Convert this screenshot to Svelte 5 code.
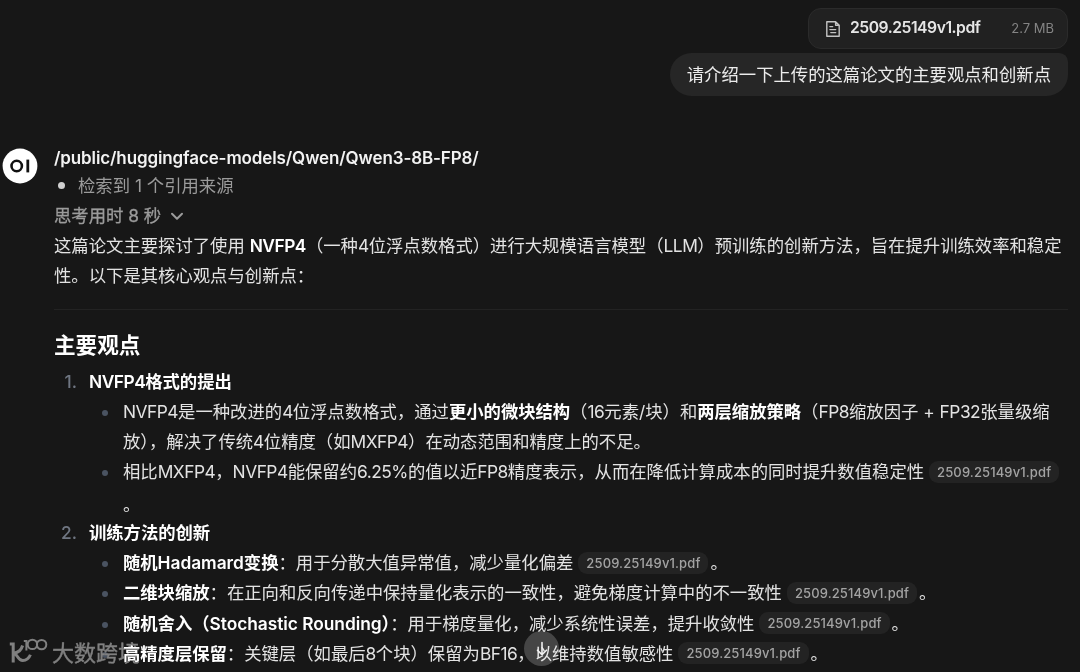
<script lang="ts">
  type Item = { lines: string[]; cite?: boolean; wrapEnd?: boolean };
  type Section = { title: string; items: Item[] };

  const file = { name: "2509.25149v1.pdf", size: "2.7 MB" };

  const intro = [
    "这篇论文主要探讨了使用 **NVFP4**（一种4位浮点数格式）进行大规模语言模型（LLM）预训练的创新方法，旨在提升训练效率和稳定",
    "性。以下是其核心观点与创新点：",
  ];

  const sections: Section[] = [
    {
      title: "NVFP4格式的提出",
      items: [
        {
          lines: [
            "NVFP4是一种改进的4位浮点数格式，通过**更小的微块结构**（16元素/块）和**两层缩放策略**（FP8缩放因子 + FP32张量级缩",
            "放），解决了传统4位精度（如MXFP4）在动态范围和精度上的不足。",
          ],
        },
        {
          lines: ["相比MXFP4，NVFP4能保留约6.25%的值以近FP8精度表示，从而在降低计算成本的同时提升数值稳定性"],
          cite: true,
          wrapEnd: true,
        },
      ],
    },
    {
      title: "训练方法的创新",
      items: [
        { lines: ["**随机Hadamard变换**：用于分散大值异常值，减少量化偏差"], cite: true },
        { lines: ["**二维块缩放**：在正向和反向传递中保持量化表示的一致性，避免梯度计算中的不一致性"], cite: true },
        { lines: ["**随机舍入（Stochastic Rounding）**：用于梯度量化，减少系统性误差，提升收敛性"], cite: true },
        { lines: ["**高精度层保留**：关键层（如最后8个块）保留为BF16，以维持数值敏感性"], cite: true },
      ],
    },
  ];

  // Odd parts of a split on ** are the bold ones.
  const parts = (s: string) => s.split("**");
  // Odd parts here are runs of capitals and digits, which are set tighter.
  const runs = (s: string) => s.split(/([A-Z0-9.%+]{2,}|\d)/);
</script>

{#snippet tight(text: string)}
  {#each runs(text) as r, i (i)}{#if i % 2}<span class="caps">{r}</span>{:else}{r}{/if}{/each}
{/snippet}

{#snippet rich(text: string)}
  {#each parts(text) as p, i (i)}{#if i % 2}<strong>{@render tight(p)}</strong>{:else}{@render tight(p)}{/if}{/each}
{/snippet}

<main class="chat">
  <section class="user">
    <div class="file">
      <svg viewBox="0 0 16 18" width="16" height="18" fill="none" stroke="currentColor" stroke-width="1.4" stroke-linejoin="round" stroke-linecap="round">
        <path d="M10.6 1.7H1.8v14.6h12.4V5.2zM10.6 1.7v3.5h3.6M4.9 6.6h2.8M4.9 9.6h5.8M5.8 12.6h4.9" />
      </svg>
      <span class="name">{file.name}</span>
      <span class="size">{file.size}</span>
    </div>
    <div class="bubble">请介绍一下上传的这篇论文的主要观点和创新点</div>
  </section>

  <section class="reply">
    <div class="avatar">
      <svg viewBox="0 0 36 36" width="36" height="36">
        <circle cx="18" cy="18" r="17.4" fill="#fff" />
        <circle cx="14.7" cy="18" r="5.2" fill="none" stroke="#111" stroke-width="2.6" />
        <path d="M25.8 11.6v12.8" stroke="#111" stroke-width="2.8" />
      </svg>
    </div>
    <div class="content">
      <div class="model">/public/huggingface-models/Qwen/Qwen3-8B-FP8/</div>
      <div class="status"><i class="dot"></i>检索到 1 个引用来源</div>
      <div class="thought">
        思考用时 8 秒
        <svg viewBox="0 0 14 10" width="14" height="10" fill="none" stroke="currentColor" stroke-width="2" stroke-linecap="round" stroke-linejoin="round">
          <path d="M2 2.7l5 5 5-5" />
        </svg>
      </div>
      <div class="intro">
        {#each intro as line (line)}
          <div class="line">{@render rich(line)}</div>
        {/each}
      </div>
      <hr />
      <h3>主要观点</h3>
      <ol>
        {#each sections as s, n (s.title)}
          <li>
            <div class="line head"><span class="num">{n + 1}.</span><strong>{@render tight(s.title)}</strong></div>
            <ul>
              {#each s.items as item (item.lines[0])}
                <li class="item">
                  {#each item.lines as line, i (i)}
                    <div class="line">
                      {@render rich(line)}{#if item.cite}<span class="cite">{file.name}</span>{#if !item.wrapEnd}。{/if}{/if}
                    </div>
                  {/each}
                  {#if item.wrapEnd}<div class="line end">。</div>{/if}
                </li>
              {/each}
            </ul>
          </li>
        {/each}
      </ol>
    </div>
  </section>

  <div class="watermark">
    <svg viewBox="0 0 40 26" width="40" height="26" fill="none" stroke="currentColor" stroke-width="3">
      <path d="M.8 6h3.400v18.500M13.600 7.500C12.500 11.500 9.500 14.500 5 15.200c3.200.4 3.600 7.300 8.800 7.300 3.800 0 6.200-2.300 7.600-5.700" />
      <path d="M14.800 3h2.600v9.500" stroke-width="2" />
      <circle cx="23.400" cy="6.400" r="4.700" stroke-width="2" />
      <circle cx="32.600" cy="6.600" r="4.700" stroke-width="2" />
    </svg>
    <span>大数跨境</span>
  </div>

  <button class="down" aria-label="down">
    <svg viewBox="0 0 16 16" width="16" height="16" fill="none" stroke="currentColor" stroke-width="1.6" stroke-linecap="round" stroke-linejoin="round">
      <path d="M8 1.500v12M3.500 9.200L8 13.600l4.500-4.400" />
    </svg>
  </button>
</main>

<style>
  :global(body) {
    background: #171717;
    overflow: hidden;
  }
  .chat {
    position: relative;
    box-sizing: border-box;
    width: 1080px;
    height: 672px;
    overflow: hidden;
    padding: 8px 12px 0 0;
    background: #171717;
    color: #e3e3e3;
    font-family: Inter, "Noto Sans CJK SC", sans-serif;
    font-size: 17.35px;
    line-height: 30.25px;
  }
  .user {
    display: flex;
    flex-direction: column;
    align-items: flex-end;
    gap: 4px;
  }
  .file {
    box-sizing: border-box;
    display: flex;
    align-items: center;
    width: 260px;
    height: 41px;
    padding: 0 13px 0 16px;
    border: 1px solid #2b2b2b;
    border-radius: 13px;
    background: #212121;
    color: #c4c4c4;
  }
  .file .name {
    margin-left: 9px;
    color: #e6e6e6;
    font-size: 15.7px;
    font-weight: 600;
    letter-spacing: -0.47px;
  }
  .file .size {
    margin-left: auto;
    color: #848484;
    font-size: 13px;
  }
  .bubble {
    box-sizing: border-box;
    height: 43px;
    padding: 0 17px;
    border-radius: 22px 9px 22px 22px;
    background: #262626;
    color: #ececec;
    line-height: 43.500px;
    white-space: nowrap;
  }
  .reply {
    display: flex;
    margin-top: 45.500px;
  }
  .avatar {
    width: 54px;
    padding: 6px 0 0 1.500px;
    box-sizing: border-box;
    flex: none;
  }
  .avatar svg {
    display: block;
  }
  .content {
    flex: 1;
    min-width: 0;
  }
  .model {
    height: 29px;
    color: #f3f3f3;
    font-weight: 600;
    font-size: 17px;
    line-height: 32px;
    letter-spacing: -0.12px;
  }
  .status {
    display: flex;
    align-items: center;
    color: #9b9b9b;
  }
  .dot {
    width: 7px;
    height: 7px;
    margin: 0 13px 0 4px;
    border-radius: 50%;
    background: #d0d0d0;
  }
  .thought {
    display: flex;
    align-items: center;
    gap: 9px;
    color: #9b9b9b;
    -webkit-text-stroke: 0.3px #9b9b9b;
  }
  .line {
    height: 30.25px;
    white-space: nowrap;
  }
  .end {
    line-height: 34px;
  }
  .caps {
    letter-spacing: -0.5px;
  }
  strong {
    color: #fff;
    font-weight: 600;
    letter-spacing: -0.04px;
  }
  hr {
    height: 1px;
    margin: 17px 0 0;
    border: 0;
    background: #232323;
  }
  h3 {
    margin: 20px 0 6px;
    color: #fff;
    font-size: 21.6px;
    font-weight: 600;
    line-height: 31px;
  }
  ol,
  ul {
    margin: 0;
    padding: 0;
    list-style: none;
  }
  .head {
    display: flex;
  }
  .num {
    width: 23px;
    margin-right: 12px;
    color: #6f7682;
    font-weight: 500;
    text-align: right;
  }
  .item {
    position: relative;
    padding-left: 69px;
  }
  .item::before {
    content: "";
    position: absolute;
    left: 48px;
    top: 13px;
    width: 6px;
    height: 6px;
    border-radius: 50%;
    background: #4a5361;
  }
  .cite {
    display: inline-block;
    height: 22px;
    margin: 0 2px 0 5px;
    padding: 0 8px;
    border-radius: 9px;
    background: #232323;
    color: #a3a3a3;
    font-size: 13px;
    font-weight: 500;
    line-height: 22px;
    letter-spacing: 0.12px;
    vertical-align: 1.500px;
  }
  .watermark {
    position: absolute;
    left: 9px;
    top: 638px;
    display: flex;
    gap: 3px;
    color: #808080;
    mix-blend-mode: lighten;
  }
  .watermark span {
    font-size: 22px;
    -webkit-text-stroke: 0.4px #808080;
  }
  .down {
    position: absolute;
    left: 524px;
    top: 631px;
    display: grid;
    place-items: center;
    width: 35px;
    height: 35px;
    padding: 0;
    border: 0;
    border-radius: 50%;
    background: rgba(255, 255, 255, 0.2);
    color: #f0f0f0;
  }
</style>
